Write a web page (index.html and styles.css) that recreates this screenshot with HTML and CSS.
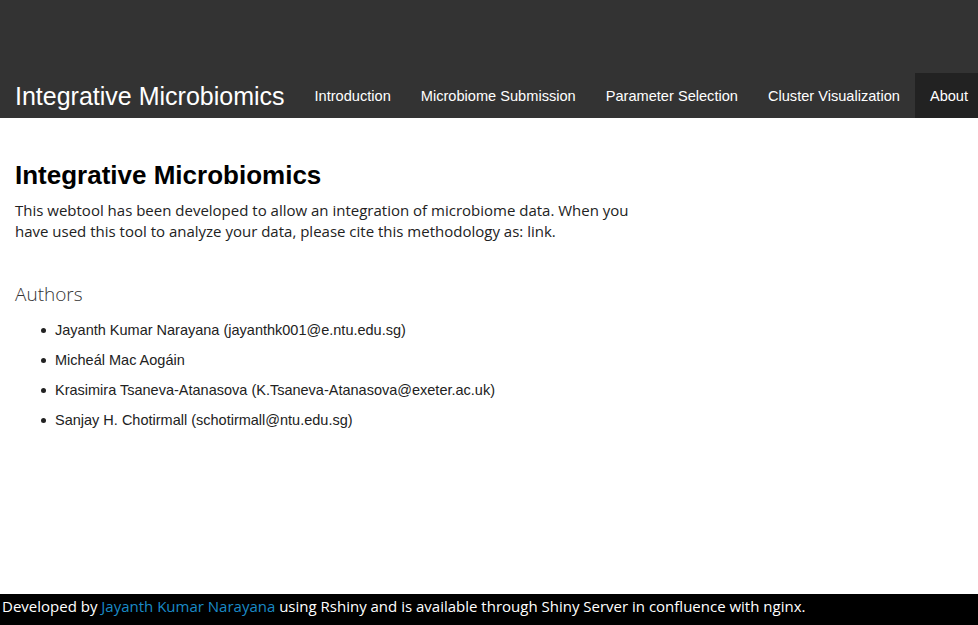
FILE: index.html
```html
<!DOCTYPE html>
<html>
<head>
<meta charset="utf-8">
<link rel="stylesheet" href="styles.css">
</head>
<body>
<div class="page">
  <header class="top">
    <div class="topband"></div>
    <nav class="navbar">
      <span class="brand">Integrative Microbiomics</span>
      <ul class="nav">
        <li><a>Introduction</a></li>
        <li><a>Microbiome Submission</a></li>
        <li><a>Parameter Selection</a></li>
        <li><a>Cluster Visualization</a></li>
        <li class="active"><a>About</a></li>
      </ul>
    </nav>
  </header>
  <main class="content">
    <h2 class="title">Integrative Microbiomics</h2>
    <p class="intro">This webtool has been developed to allow an integration of microbiome data. When you have used this tool to analyze your data, please cite this methodology as: link.</p>
    <h3 class="authors-title">Authors</h3>
    <ul class="authors">
      <li>Jayanth Kumar Narayana (jayanthk001@e.ntu.edu.sg)</li>
      <li>Micheál Mac Aogáin</li>
      <li>Krasimira Tsaneva-Atanasova (K.Tsaneva-Atanasova@exeter.ac.uk)</li>
      <li>Sanjay H. Chotirmall (schotirmall@ntu.edu.sg)</li>
    </ul>
  </main>
  <footer class="footer">Developed by <a class="flink">Jayanth Kumar Narayana</a> using Rshiny and is available through Shiny Server in confluence with nginx.</footer>
</div>
</body>
</html>
```

FILE: styles.css
```css
* { box-sizing: border-box; }
html, body { margin: 0; padding: 0; height: 100%; }
body { background: #fff; font-family: "Open Sans", sans-serif; color: #333; }
.page { display: flex; flex-direction: column; height: 625px; }
.top { background: #333; }
.topband { height: 73px; }
.navbar { display: flex; align-items: stretch; height: 45px; white-space: nowrap; }
.brand {
  font-family: "Liberation Sans", Arial, sans-serif;
  font-size: 25px; color: #fff; padding: 2px 15px 0; line-height: 43px; flex: none;
}
.nav { display: flex; list-style: none; margin: 0; padding: 0; flex: none; }
.nav li a {
  display: block; font-family: "Liberation Sans", Arial, sans-serif;
  font-size: 14.6px; color: #fff; padding: 2px 15px 0; line-height: 43px;
}
.nav li.active a { background: #222; padding-right: 10px; }
.content { flex: 1; padding: 0 15px; }
.title {
  font-family: "Liberation Sans", Arial, sans-serif; font-weight: bold;
  font-size: 26px; color: #000; margin: 42px 0 0; line-height: 30px;
}
.intro { font-size: 15px; line-height: 21px; color: #222; margin: 10px 0 0; max-width: 630px; }
.authors-title { font-weight: 300; font-size: 19px; color: #333; margin: 38px 0 0; line-height: 28px; }
.authors {
  font-family: "Liberation Sans", Arial, sans-serif; font-size: 14.5px; color: #222;
  margin: 12px 0 0; padding-left: 40px; list-style: none;
}
.authors li { line-height: 20px; margin-bottom: 10px; position: relative; }
.authors li::before {
  content: ""; position: absolute; left: -14px; top: 8px;
  width: 5px; height: 5px; border-radius: 50%; background: #222;
}
.footer {
  background: #000; color: #fff; height: 31px; line-height: 24px; padding: 0 2px;
  font-size: 15px; white-space: nowrap;
}
.flink { color: #1a8ac6; }
```
